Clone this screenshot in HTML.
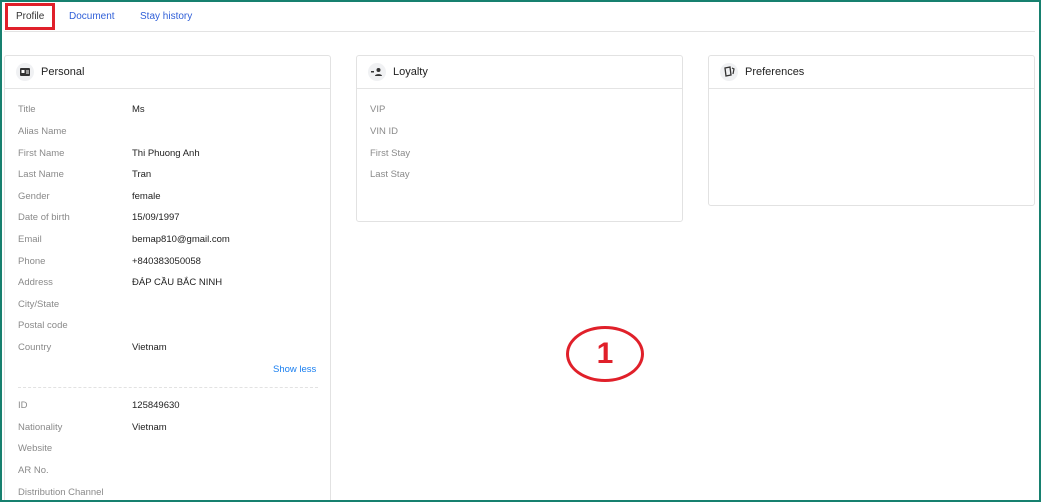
<!DOCTYPE html>
<html><head><style>
*{box-sizing:border-box;margin:0;padding:0}
html,body{width:1041px;height:502px;overflow:hidden}
body{background:#fff;font-family:"Liberation Sans",sans-serif;position:relative}
.frame{position:absolute;left:0;top:0;width:1041px;height:502px;border:2px solid #17806f;z-index:5;pointer-events:none}
.tabs{position:absolute;left:4px;right:6px;top:31px;border-top:1px solid #e3e3e3}
.tab{position:absolute;top:11px;font-size:10px;color:#2f5fd8}
.redbox{position:absolute;left:5px;top:3px;width:50px;height:27px;border:3px solid #e0202a;background:#fff}
.card{position:absolute;top:55px;width:327px;border:1px solid #e2e2e2;border-radius:3px;background:#fff}
.hd{height:33px;border-bottom:1px solid #e4e4e4;position:relative;font-size:11px;color:#222}
.hd .ic{position:absolute;left:11px;top:7px;width:18px;height:18px;border-radius:50%;background:#f0f1f3}
.hd span{position:absolute;left:36px;top:10px}
.row{position:absolute;font-size:9.5px;color:#8a8a8a}
.val{position:absolute;font-size:9.5px;color:#222}
</style></head><body>
<div class="frame"></div>
<div class="tabs"></div>
<div class="redbox"></div>
<div class="tab" style="left:16px;color:#333">Profile</div>
<div class="tab" style="left:69px">Document</div>
<div class="tab" style="left:140px">Stay history</div>

<div class="card" style="left:4px;height:460px">
 <div class="hd"><div class="ic"><svg width="18" height="18"><rect x="4" y="5" width="10" height="8" fill="#333" rx="1"/><rect x="5.5" y="7" width="3" height="3" fill="#fff"/><rect x="10" y="7.5" width="3" height="1" fill="#fff"/><rect x="10" y="9.5" width="3" height="1" fill="#fff"/></svg></div><span>Personal</span></div>
</div>
<div class="card" style="left:356px;height:167px">
 <div class="hd"><div class="ic"><svg width="18" height="18"><circle cx="10.5" cy="7" r="2" fill="#333"/><path d="M7 13c0-2.5 7-2.5 7 0z" fill="#333"/><rect x="3" y="8" width="3" height="1.5" fill="#333"/></svg></div><span>Loyalty</span></div>
</div>
<div class="card" style="left:708px;height:151px">
 <div class="hd"><div class="ic"><svg width="18" height="18"><path d="M5 5l5-1 1 8-5 1z" fill="none" stroke="#333" stroke-width="1.3"/><path d="M12 5l2 1-1 5" fill="none" stroke="#333" stroke-width="1.2"/></svg></div><span>Preferences</span></div>
</div>

<div class="row" style="left:18px;top:104px">Title</div><div class="val" style="left:132px;top:104px">Ms</div>
<div class="row" style="left:18px;top:126px">Alias Name</div>
<div class="row" style="left:18px;top:148px">First Name</div><div class="val" style="left:132px;top:148px">Thi Phuong Anh</div>
<div class="row" style="left:18px;top:169px">Last Name</div><div class="val" style="left:132px;top:169px">Tran</div>
<div class="row" style="left:18px;top:191px">Gender</div><div class="val" style="left:132px;top:191px">female</div>
<div class="row" style="left:18px;top:212px">Date of birth</div><div class="val" style="left:132px;top:212px">15/09/1997</div>
<div class="row" style="left:18px;top:234px">Email</div><div class="val" style="left:132px;top:234px">bemap810@gmail.com</div>
<div class="row" style="left:18px;top:256px">Phone</div><div class="val" style="left:132px;top:256px">+840383050058</div>
<div class="row" style="left:18px;top:277px">Address</div><div class="val" style="left:132px;top:277px">ĐÁP CẦU BẮC NINH</div>
<div class="row" style="left:18px;top:299px">City/State</div>
<div class="row" style="left:18px;top:320px">Postal code</div>
<div class="row" style="left:18px;top:342px">Country</div><div class="val" style="left:132px;top:342px">Vietnam</div>
<div class="val" style="left:273px;top:364px;color:#1a7ff0">Show less</div>
<div style="position:absolute;left:18px;top:387px;width:300px;border-top:1px dashed #e2e2e2"></div>
<div class="row" style="left:18px;top:400px">ID</div><div class="val" style="left:132px;top:400px">125849630</div>
<div class="row" style="left:18px;top:422px">Nationality</div><div class="val" style="left:132px;top:422px">Vietnam</div>
<div class="row" style="left:18px;top:443px">Website</div>
<div class="row" style="left:18px;top:465px">AR No.</div>
<div class="row" style="left:18px;top:487px">Distribution Channel</div>

<div class="row" style="left:370px;top:104px">VIP</div>
<div class="row" style="left:370px;top:126px">VIN ID</div>
<div class="row" style="left:370px;top:148px">First Stay</div>
<div class="row" style="left:370px;top:169px">Last Stay</div>

<div style="position:absolute;left:566px;top:326px;width:78px;height:56px;border:3px solid #e0202a;border-radius:50%;text-align:center;font:bold 30px/50px 'Liberation Sans',sans-serif;color:#e0202a">1</div>
</body></html>
